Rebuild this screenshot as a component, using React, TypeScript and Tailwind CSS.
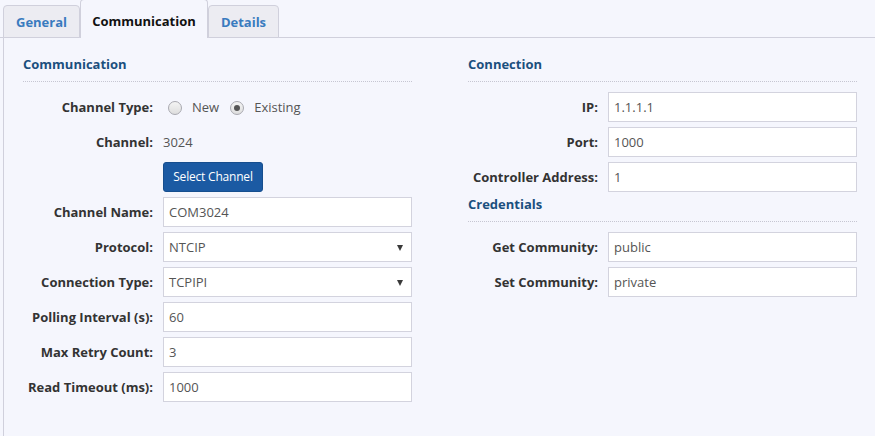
import React from "react";

const font = { fontFamily: '"Open Sans", "Noto Sans", "Liberation Sans", sans-serif' };

function Row({ label, children }: { label: string; children: React.ReactNode }) {
  return (
    <div className="flex h-[30px] items-center">
      <div className="w-[130px] shrink-0 text-right text-[13px] font-bold text-[#333333] whitespace-nowrap pt-[2px]">{label}</div>
      <div className="ml-[10px] w-[249px] h-full flex items-center">{children}</div>
    </div>
  );
}

function Input({ value }: { value: string }) {
  return (
    <div className="w-full h-full bg-white border border-[#d3d3de] flex items-center pl-[5px] pt-[2px] text-[13px] text-[#555555]">
      {value}
    </div>
  );
}

function Select({ value }: { value: string }) {
  return (
    <div className="w-full h-full bg-white border border-[#d3d3de] flex items-center justify-between pl-[5px] pr-[8px] pt-[2px] text-[13px] text-[#555555]">
      <span>{value}</span>
      <svg width="6" height="6" viewBox="0 0 6 6">
        <path d="M0 0 L6 0 L3 6 Z" fill="#3a3a3a" />
      </svg>
    </div>
  );
}

function Radio({ checked }: { checked?: boolean }) {
  return (
    <span className="w-[14px] h-[14px] rounded-full border border-[#a9a9b0] bg-gradient-to-b from-[#f4f4f4] to-[#dedede] flex items-center justify-center">
      {checked && <span className="w-[6px] h-[6px] rounded-full bg-[#555555]" />}
    </span>
  );
}

function Heading({ text }: { text: string }) {
  return (
    <div className="text-[13px] font-bold text-[#1b4f7e] leading-[18px] pb-[8px] border-b border-dotted border-[#c6c6d2]">{text}</div>
  );
}

export default function App() {
  return (
    <div style={font} className="w-[875px] h-[436px] bg-[#f5f6fd] overflow-hidden">
      <div className="flex items-end h-[38px] pl-[3px] border-b border-[#d0d0dc]">
        <div className="w-[77px] h-[33px] -mb-px pt-[2px] flex items-center justify-center bg-[#ececf2] border border-[#d0d0dc] rounded-t-[4px] text-[13px] font-bold text-[#3a7bbf]">General</div>
        <div className="w-[128px] h-[39px] -mb-px pt-[5px] flex items-center justify-center bg-[#f5f6fd] border border-b-0 border-[#d0d0dc] rounded-t-[4px] text-[13px] font-bold text-[#111111]">Communication</div>
        <div className="w-[71px] h-[33px] -mb-px pt-[2px] flex items-center justify-center bg-[#ececf2] border border-[#d0d0dc] rounded-t-[4px] text-[13px] font-bold text-[#3a7bbf]">Details</div>
      </div>
      <div className="ml-[3px] h-[398px] border-l border-[#d0d0dc] pl-[19px] pt-[17px] flex gap-[56px]">
        <div className="w-[389px] flex flex-col">
          <Heading text="Communication" />
          <div className="mt-[10px] flex flex-col gap-[5px]">
            <Row label="Channel Type:">
              <div className="flex items-center pl-[5px] text-[13px] text-[#555555] pt-[1px]">
                <Radio />
                <span className="ml-[10px] pt-[1px]">New</span>
                <span className="ml-[11px]"><Radio checked /></span>
                <span className="ml-[10px] pt-[1px]">Existing</span>
              </div>
            </Row>
            <Row label="Channel:">
              <span className="text-[13px] text-[#555555] pt-[2px]">3024</span>
            </Row>
            <div className="flex h-[30px]">
              <div className="w-[130px]" />
              <button className="ml-[10px] w-[100px] h-[30px] bg-[#1b5aa3] border border-[#164e8e] rounded-[3px] text-white text-[12px] tracking-[-0.2px]">Select Channel</button>
            </div>
            <Row label="Channel Name:"><Input value="COM3024" /></Row>
            <Row label="Protocol:"><Select value="NTCIP" /></Row>
            <Row label="Connection Type:"><Select value="TCPIPI" /></Row>
            <Row label="Polling Interval (s):"><Input value="60" /></Row>
            <Row label="Max Retry Count:"><Input value="3" /></Row>
            <Row label="Read Timeout (ms):"><Input value="1000" /></Row>
          </div>
        </div>
        <div className="w-[389px] flex flex-col">
          <Heading text="Connection" />
          <div className="mt-[10px] flex flex-col gap-[5px]">
            <Row label="IP:"><Input value="1.1.1.1" /></Row>
            <Row label="Port:"><Input value="1000" /></Row>
            <Row label="Controller Address:"><Input value="1" /></Row>
          </div>
          <div className="mt-[3px]">
            <Heading text="Credentials" />
          </div>
          <div className="mt-[10px] flex flex-col gap-[5px]">
            <Row label="Get Community:"><Input value="public" /></Row>
            <Row label="Set Community:"><Input value="private" /></Row>
          </div>
        </div>
      </div>
    </div>
  );
}
